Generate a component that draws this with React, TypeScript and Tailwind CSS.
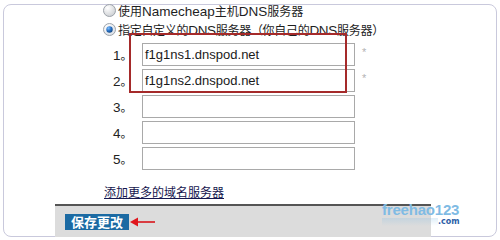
import React from "react";

const FONT = "font-['Liberation_Sans','Noto_Sans_CJK_SC',sans-serif]";

function Mixed({ text }: { text: string }) {
  const parts = text.split(/([\u3000-\u303f\u4e00-\u9fff\uff00-\uffef]+)/).filter((p) => p.length > 0);
  return (
    <>
      {parts.map((p, i) =>
        /[\u3000-\u303f\u4e00-\u9fff\uff00-\uffef]/.test(p) ? (
          <span key={i} className="text-[12px] font-['Noto_Sans_CJK_SC',sans-serif]">
            {p}
          </span>
        ) : (
          <span key={i} className="text-[13.5px] font-['Liberation_Sans',sans-serif]">
            {p}
          </span>
        )
      )}
    </>
  );
}

function Radio({ checked }: { checked: boolean }) {
  return (
    <svg width="13" height="13" viewBox="0 0 13 13" className="shrink-0">
      <defs>
        <radialGradient id={checked ? "rgc" : "rgu"} cx="0.35" cy="0.3" r="0.8">
          <stop offset="0" stopColor="#ffffff" />
          <stop offset="1" stopColor={checked ? "#d8dde4" : "#c9ccd0"} />
        </radialGradient>
        <radialGradient id="dot" cx="0.35" cy="0.3" r="0.8">
          <stop offset="0" stopColor="#7fc0ff" />
          <stop offset="0.5" stopColor="#2a72c4" />
          <stop offset="1" stopColor="#0d3f7a" />
        </radialGradient>
      </defs>
      <circle cx="6.5" cy="6.5" r="6" fill={`url(#${checked ? "rgc" : "rgu"})`} stroke="#9da3aa" strokeWidth="1" />
      {checked && <circle cx="6.5" cy="6.5" r="3.2" fill="url(#dot)" />}
    </svg>
  );
}

function Row({ n, value }: { n: number; value?: string }) {
  return (
    <div className="flex items-center h-[23px]">
      <div className="w-[29px] leading-[23px] text-[#222]">
        <Mixed text={`${n}。`} />
      </div>
      <div className="w-[213px] h-[23px] border border-[#a9a9a9] bg-white flex items-center pl-[2px] text-[13px] text-[#1a1a1a] font-['Liberation_Sans',sans-serif]">
        {value ?? ""}
      </div>
      {value ? (
        <span className="ml-[7px] -mt-[4px] text-[11px] text-[#b4b4b4] font-['Liberation_Sans',sans-serif]">*</span>
      ) : null}
    </div>
  );
}

export default function App() {
  return (
    <div className={`w-[500px] h-[240px] bg-white overflow-hidden pt-[4px] pl-[3px] ${FONT}`}>
      <div className="relative w-[494px] h-[233px] border border-[#c9c9dc] rounded-[8px]">
        <div className="-mt-[4px] pl-[99px]">
          <div className="flex items-center gap-[2px] h-[19px] text-[#1e1e1e]">
            <Radio checked={false} />
            <span className="leading-[19px]">
              <Mixed text="使用Namecheap主机DNS服务器" />
            </span>
          </div>
          <div className="flex items-center gap-[2px] h-[19px] text-[#1e1e1e] tracking-[-0.3px]">
            <Radio checked={true} />
            <span className="leading-[19px]">
              <Mixed text="指定自定义的DNS服务器（你自己的DNS服务器）" />
            </span>
          </div>
        </div>

        <div className="mt-[4px] pl-[109px] flex flex-col gap-[3px]">
          <Row n={1} value="f1g1ns1.dnspod.net" />
          <Row n={2} value="f1g1ns2.dnspod.net" />
          <Row n={3} />
          <Row n={4} />
          <Row n={5} />
        </div>

        <div className="mt-[14px] pl-[100px] leading-[16px]">
          <a className="text-[12px] text-[#16164e] underline font-['Noto_Sans_CJK_SC',sans-serif]">添加更多的域名服务器</a>
        </div>

        <div className="mt-[4px] ml-[51px] w-[376px] h-[33px] bg-[#dcdcdc] border-t-2 border-[#555555] flex items-center pl-[10px] pt-[1px]">
          <div className="h-[16px] px-[6px] bg-[#1b6aa3] text-white text-[13px] leading-[16px] font-bold font-['Noto_Sans_CJK_SC',sans-serif]">
            保存更改
          </div>
          <svg width="26" height="10" viewBox="0 0 26 10" className="ml-[1px]">
            <line x1="5" y1="5" x2="25" y2="5" stroke="#d9161c" strokeWidth="1.6" />
            <polygon points="0,5 8,0.5 8,9.5" fill="#e0161c" />
          </svg>
        </div>

        <div className="absolute left-[125px] top-[28px] w-[218px] h-[60px] border-2 border-[#a52a2a]" />

        <div className="absolute left-[378px] top-[198px] w-[84px] h-[34px] pointer-events-none">
          <div className="text-[15px] leading-[14px] font-bold text-[#7fbbe4] tracking-[-0.2px] font-['Liberation_Sans',sans-serif]">
            freehao123
          </div>
          <div className="flex items-start">
            <div className="w-[56px] h-[8px] mt-[1px] bg-gradient-to-b from-[#7fbbe4]/25 to-transparent" />
            <div className="text-[8px] leading-[9px] font-bold text-[#2d5fa8] font-['DejaVu_Sans',sans-serif]">
              .com
            </div>
          </div>
        </div>
      </div>
    </div>
  );
}
